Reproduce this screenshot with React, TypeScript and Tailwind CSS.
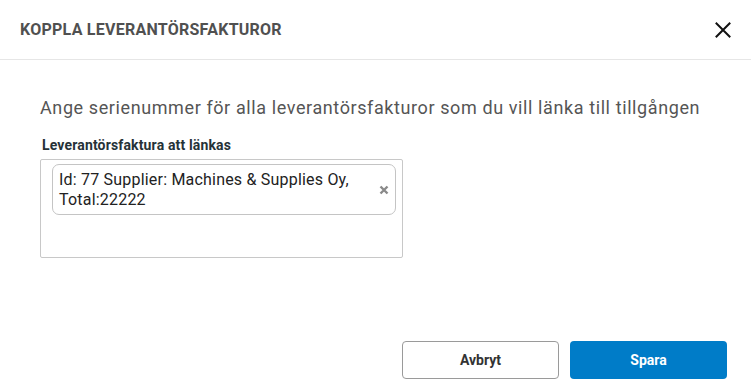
import React from "react";

export default function App() {
  return (
    <div
      className="w-[751px] h-[387px] bg-white flex flex-col"
      style={{ fontFamily: "Roboto, 'Liberation Sans', sans-serif" }}
    >
      <div className="h-[60px] border-b border-[#e6e6e6] flex items-center justify-between pl-[20px] pr-[20px] shrink-0">
        <h1 className="text-[16px] font-bold text-[#505050] tracking-[0.25px]">KOPPLA LEVERANTÖRSFAKTUROR</h1>
        <svg width="16" height="16" viewBox="0 0 16 16">
          <path d="M1.5 1.5 L14.5 14.5 M14.5 1.5 L1.5 14.5" stroke="#111" strokeWidth="2" strokeLinecap="square" />
        </svg>
      </div>
      <div className="flex-1 flex flex-col pl-[40px]">
        <p className="mt-[36px] text-[18px] leading-[24px] text-[#555] tracking-[0.6px]">
          Ange serienummer för alla leverantörsfakturor som du vill länka till tillgången
        </p>
        <label className="mt-[15px] ml-[2px] text-[14px] leading-[20px] font-bold text-[#263238] tracking-[0.15px]">
          Leverantörsfaktura att länkas
        </label>
        <div className="mt-[4px] w-[363px] h-[99px] border border-[#c8c8c8] rounded-[2px] pt-[4px] pl-[11px] pr-[6px]">
          <div className="h-[51px] border border-[#c4c4c4] rounded-[7px] flex items-center justify-between pl-[6px] pr-[5px]">
            <span className="text-[16px] leading-[20px] text-[#222] tracking-[0.2px]">
              Id: 77 Supplier: Machines &amp; Supplies Oy,
              <br />
              Total:22222
            </span>
            <svg width="10" height="10" viewBox="0 0 10 10" className="mr-[1px]">
              <path d="M1.5 1.5 L8.5 8.5 M8.5 1.5 L1.5 8.5" stroke="#8a8a8a" strokeWidth="2.4" strokeLinecap="butt" />
            </svg>
          </div>
        </div>
      </div>
      <div className="flex justify-end gap-[11px] pr-[24px] pb-[8px] shrink-0">
        <button className="w-[157px] h-[38px] rounded-[4px] border border-[#9a9a9a] bg-white text-[14px] font-bold text-[#333]">
          Avbryt
        </button>
        <button className="w-[157px] h-[38px] rounded-[4px] bg-[#007cc8] text-[14px] font-bold text-white">
          Spara
        </button>
      </div>
    </div>
  );
}
